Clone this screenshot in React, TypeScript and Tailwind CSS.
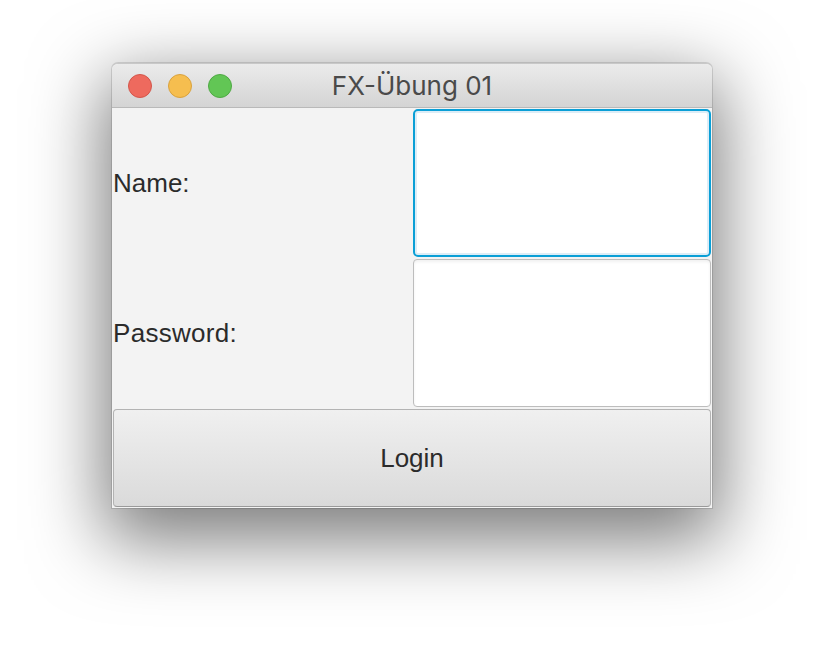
import React from 'react';

const TrafficLight: React.FC<{ fill: string }> = ({ fill }) => (
  <div className={`w-6 h-6 rounded-full border ${fill}`} />
);

const App: React.FC = () => {
  return (
    <div className="w-[824px] h-[668px] bg-white pt-[63px] pl-[112px] font-['Liberation_Sans',Arial,sans-serif]">
      <div className="w-[600px] h-[445px] flex flex-col rounded-t-[6px] bg-[#f3f3f3] border-t border-[#c8c8c8] shadow-[0_24px_72px_8px_rgba(0,0,0,0.52),0_0_0_1px_rgba(0,0,0,0.12)]">
        {/* Title bar */}
        <div className="relative h-[44px] shrink-0 flex items-center gap-4 pl-4 rounded-t-[6px] bg-gradient-to-b from-[#ebebeb] to-[#d4d4d4] border-b border-[#b9b9b9]">
          <TrafficLight fill="bg-[#ee6a5e] border-[#d3564b]" />
          <TrafficLight fill="bg-[#f6be4f] border-[#d9a23e]" />
          <TrafficLight fill="bg-[#62c655] border-[#4fa944]" />
          <div className="absolute inset-0 flex items-center justify-center text-[26px] text-[#4a4a4a] font-['Inter','Liberation_Sans',sans-serif] leading-none pointer-events-none">
            FX-Übung 01
          </div>
        </div>

        {/* Form grid */}
        <div className="flex-1 grid grid-cols-2 grid-rows-[150px_150px_1fr] text-[26px] text-[#2b2b2b]">
          <div className="flex items-center pl-px leading-none">Name:</div>
          <div className="p-px">
            <div className="w-full h-full rounded-[5px] border-2 border-[#0a9fd6] bg-white shadow-[inset_0_0_0_2px_#dcedf7]" />
          </div>

          <div className="flex items-center pl-px leading-none tracking-[0.3px]">Password:</div>
          <div className="p-px">
            <div className="w-full h-full rounded-[4px] border border-[#bdbdbd] bg-white shadow-[inset_0_2px_3px_rgba(0,0,0,0.06)]" />
          </div>

          <div className="col-span-2 p-px">
            <button className="w-full h-full rounded-[4px] border border-[#b3b3b3] border-b-[#9a9a9a] bg-gradient-to-b from-[#f0f0f0] to-[#dadada] text-[26px] text-[#2b2b2b] leading-none">
              Login
            </button>
          </div>
        </div>
      </div>
    </div>
  );
};

export default App;
